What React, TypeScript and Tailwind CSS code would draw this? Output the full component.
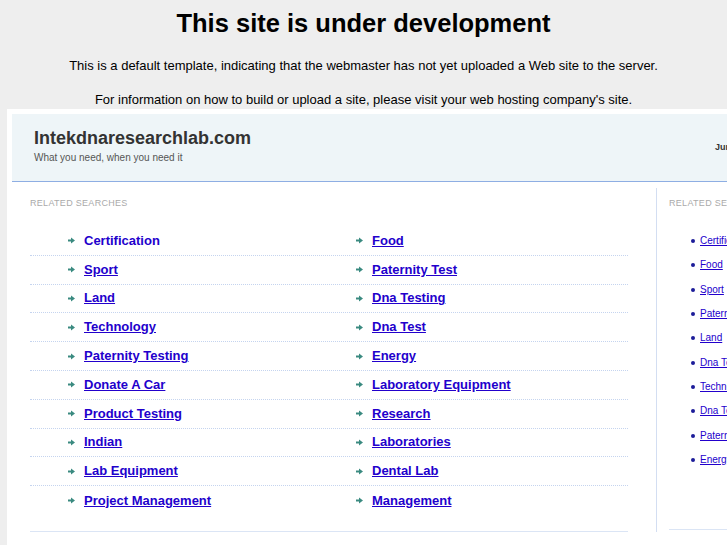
const leftA = [
	"Certification",
	"Sport",
	"Land",
	"Technology",
	"Paternity Testing",
	"Donate A Car",
	"Product Testing",
	"Indian",
	"Lab Equipment",
	"Project Management",
];

const leftB = [
	"Food",
	"Paternity Test",
	"Dna Testing",
	"Dna Test",
	"Energy",
	"Laboratory Equipment",
	"Research",
	"Laboratories",
	"Dental Lab",
	"Management",
];

const side = [
	"Certification",
	"Food",
	"Sport",
	"Paternity Test",
	"Land",
	"Dna Testing",
	"Technology",
	"Dna Test",
	"Paternity Testing",
	"Energy",
];

const Arrow = () => (
	<svg width="7" height="7" viewBox="0 0 7 7" className="shrink-0">
		<rect x="0" y="2.5" width="4" height="2" fill="#3a8a80" />
		<polygon points="3,0.5 7,3.5 3,6.5" fill="#3a8a80" />
	</svg>
);

const LinkCell = ({ text, plain }: { text: string; plain?: boolean }) => (
	<div className="flex items-center gap-[9px] pl-[38px]">
		<Arrow />
		<a
			href="#"
			className={`text-[13px] font-bold text-[#2200cc] leading-[16px] ${plain ? "no-underline" : "underline"}`}
		>
			{text}
		</a>
	</div>
);

export default function App() {
	return (
		<div className="w-[727px] h-[545px] overflow-hidden bg-[#eeeeee] font-['Liberation_Sans',Arial,sans-serif] text-black">
			<div className="pt-[8px] text-center">
				<h1 className="text-[25.5px] font-bold leading-[31px]">
					This site is under development
				</h1>
				<p className="mt-[19px] text-[13px] leading-[16px]">
					This is a default template, indicating that the webmaster has not yet uploaded a Web site to the server.
				</p>
				<p className="mt-[18px] text-[13px] leading-[16px]">
					For information on how to build or upload a site, please visit your web hosting company's site.
				</p>
			</div>

			<div className="ml-[7px] mt-[1px] w-[900px] bg-white pt-[5px] pl-[5px] pb-[40px]">
				<header className="flex h-[68px] border-b border-[#8eaee3] bg-[#eef5f8] pl-[22px] pt-[13px]">
					<div className="w-[681px]">
						<div className="text-[18px] font-bold leading-[22px] text-[#333333]">
							Intekdnaresearchlab.com
						</div>
						<div className="mt-[3px] text-[10px] leading-[12px] text-[#555555]">
							What you need, when you need it
						</div>
					</div>
					<div className="pt-[14px] text-[9px] font-bold text-[#333333]">
						June 2024
					</div>
				</header>

				<div className="mt-[6px] flex">
					<section className="w-[644px] pl-[18px] pr-[28px] pt-[10px]">
						<div className="text-[9px] leading-[11px] tracking-[0.3px] text-[#aaaaaa]">
							RELATED SEARCHES
						</div>
						<div className="mt-[18px]">
							{leftA.map((a, i) => (
								<div
									key={a}
									className={`grid h-[28.8px] grid-cols-[288px_1fr] items-center ${i < leftA.length - 1 ? "border-b border-dotted border-[#c5d4ef]" : ""}`}
								>
									<LinkCell text={a} plain={i === 0} />
									<LinkCell text={leftB[i]} />
								</div>
							))}
						</div>
						<div className="mt-[16px] h-px bg-[#dbe5f5]" />
					</section>

					<aside className="w-[240px] border-l border-[#d3def2] pl-[12px] pt-[10px]">
						<div className="text-[9px] leading-[11px] tracking-[0.3px] text-[#aaaaaa]">
							RELATED SEARCHES
						</div>
						<ul className="mt-[20px]">
							{side.map((s) => (
								<li key={s} className="flex h-[24.33px] items-center pl-[22px]">
									<span className="mr-[5px] h-[4px] w-[4px] rounded-full bg-[#1c1c99]" />
									<a href="#" className="text-[10px] leading-[12px] text-[#2200cc] underline">
										{s}
									</a>
								</li>
							))}
						</ul>
						<div className="mt-[57px] h-px bg-[#dbe5f5]" />
					</aside>
				</div>
			</div>
		</div>
	);
}
